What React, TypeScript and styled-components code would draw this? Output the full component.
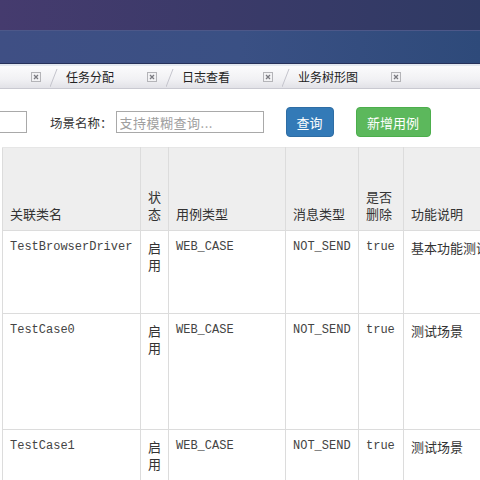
import React from "react";
import styled, { createGlobalStyle } from "styled-components";

const GlobalStyle = createGlobalStyle`
  html, body {
    margin: 0;
    padding: 0;
    background: #fff;
    overflow: hidden;
  }
  body {
    font-family: "Noto Sans CJK SC", "Noto Sans", sans-serif;
    color: #333;
  }
`;

const Page = styled.div`
  width: 480px;
  height: 480px;
  overflow: hidden;
`;

const Banner = styled.div`
  display: flex;
  flex-direction: column;
  height: 63px;
  border-bottom: 1px solid #26315a;
`;

const BannerTop = styled.div`
  height: 30px;
  background: linear-gradient(90deg, #453b6e 0%, #3b3a69 45%, #2f3a64 100%);
  border-bottom: 1px solid #4d5889;
`;

const BannerBottom = styled.div`
  flex: 1;
  background: linear-gradient(90deg, #3f4f84 0%, #3a5084 50%, #2e4a7a 100%);
`;

const Strip = styled.div`
  height: 2px;
  background: #e3e8ef;
`;

const TabBar = styled.div`
  display: flex;
  align-items: center;
  height: 22px;
  background: linear-gradient(180deg, #fbfbfc 0%, #f1f1f4 60%, #e2e2e7 100%);
  border-bottom: 1px solid #c9c9d1;
  overflow: hidden;
`;

const Tab = styled.div<{ $first?: boolean }>`
  display: flex;
  align-items: center;
  flex: none;
  height: 100%;
  margin-left: ${({ $first }) => ($first ? "31px" : "0")};
`;

const TabLabel = styled.span`
  font-size: 12px;
  color: #222;
  margin: 0 33px 0 8px;
  white-space: nowrap;
  line-height: 22px;
`;

const Slash = styled.svg`
  flex: none;
  margin-left: 9px;
`;

const Close = styled.svg`
  flex: none;
`;

const SearchRow = styled.div`
  display: flex;
  align-items: center;
  height: 30px;
  margin-top: 18px;
`;

const TextInput = styled.input<{ $width: number }>`
  box-sizing: border-box;
  width: ${({ $width }) => $width}px;
  height: 22px;
  border: 1px solid #a9a9a9;
  padding: 0 3px;
  font-family: "Noto Sans CJK SC", sans-serif;
  font-size: 13px;
  color: #333;
  outline: none;
  &::placeholder {
    color: #a0a0a0;
    letter-spacing: 0.5px;
  }
`;

const CutInput = styled(TextInput)`
  margin-left: -93px;
`;

const Label = styled.span`
  font-size: 12.5px;
  color: #333;
  margin: 0 3px 0 23px;
  white-space: nowrap;
`;

const Button = styled.button<{ $color: string; $border: string; $width: number; $gap: number }>`
  box-sizing: border-box;
  width: ${({ $width }) => $width}px;
  height: 30px;
  margin-left: ${({ $gap }) => $gap}px;
  background: ${({ $color }) => $color};
  border: 1px solid ${({ $border }) => $border};
  border-radius: 4px;
  color: #fff;
  font-family: "Noto Sans CJK SC", sans-serif;
  font-size: 13px;
  padding: 0;
`;

const Table = styled.table`
  margin: 10px 0 0 2px;
  border-collapse: collapse;
  table-layout: fixed;
  width: 561px;
`;

const Col = styled.col<{ $w: number }>`
  width: ${({ $w }) => $w}px;
`;

const Th = styled.th`
  height: 74px;
  background: #eeeeee;
  border: 1px solid #dcdcdc;
  border-top-color: #e6e6e6;
  vertical-align: bottom;
  text-align: left;
  font-weight: normal;
  font-size: 13px;
  line-height: 17px;
  color: #333;
  padding: 0 7px 8px 7px;
  white-space: nowrap;
  overflow: hidden;
`;

const Narrow = styled.span`
  display: block;
  white-space: normal;
  word-break: break-all;
`;

const Td = styled.td<{ $h: number; $mono?: boolean }>`
  height: ${({ $h }) => $h}px;
  border: 1px solid #dcdcdc;
  vertical-align: top;
  text-align: left;
  padding: 8px 7px 0 7px;
  font-family: ${({ $mono }) =>
    $mono ? `"Liberation Mono", "Courier New", monospace` : `"Noto Sans CJK SC", sans-serif`};
  font-size: ${({ $mono }) => ($mono ? "12px" : "13px")};
  line-height: 17px;
  color: ${({ $mono }) => ($mono ? "#444" : "#333")};
  white-space: nowrap;
  overflow: hidden;
`;

const CloseIcon = () => (
  <Close width="10" height="10" viewBox="0 0 10 10">
    <rect x="0.5" y="0.5" width="9" height="9" fill="#f2f2f4" stroke="#b4b4b8" />
    <path d="M3 3 L7 7 M7 3 L3 7" stroke="#7a7a80" strokeWidth="1.3" />
  </Close>
);

const SlashIcon = () => (
  <Slash width="8" height="22" viewBox="0 0 8 22">
    <path d="M0 21 L7 3" stroke="#c4c4cc" strokeWidth="1" fill="none" />
  </Slash>
);

const tabs = ["任务分配", "日志查看", "业务树形图"];

const columns = [138, 28, 117, 73, 45, 160];

const rows = [
  { name: "TestBrowserDriver", type: "WEB_CASE", msg: "NOT_SEND", del: "true", desc: "基本功能测试用例", h: 74 },
  { name: "TestCase0", type: "WEB_CASE", msg: "NOT_SEND", del: "true", desc: "测试场景", h: 107 },
  { name: "TestCase1", type: "WEB_CASE", msg: "NOT_SEND", del: "true", desc: "测试场景", h: 107 },
];

export default function App() {
  return (
    <Page>
      <GlobalStyle />
      <Banner>
        <BannerTop />
        <BannerBottom />
      </Banner>
      <Strip />
      <TabBar>
        <Tab $first>
          <CloseIcon />
        </Tab>
        {tabs.map((t) => (
          <Tab key={t}>
            <SlashIcon />
            <TabLabel>{t}</TabLabel>
            <CloseIcon />
          </Tab>
        ))}
      </TabBar>
      <SearchRow>
        <CutInput $width={120} />
        <Label>场景名称：</Label>
        <TextInput $width={148} placeholder="支持模糊查询..." />
        <Button $color="#337ab7" $border="#2e6da4" $width={48} $gap={22}>
          查询
        </Button>
        <Button $color="#5cb85c" $border="#4cae4c" $width={75} $gap={22}>
          新增用例
        </Button>
      </SearchRow>
      <Table>
        <colgroup>
          {columns.map((w, i) => (
            <Col key={i} $w={w} />
          ))}
        </colgroup>
        <thead>
          <tr>
            <Th>关联类名</Th>
            <Th>
              <Narrow>状态</Narrow>
            </Th>
            <Th>用例类型</Th>
            <Th>消息类型</Th>
            <Th>
              <Narrow>是否删除</Narrow>
            </Th>
            <Th>功能说明</Th>
          </tr>
        </thead>
        <tbody>
          {rows.map((r) => (
            <tr key={r.name}>
              <Td $h={r.h} $mono>
                {r.name}
              </Td>
              <Td $h={r.h}>
                <Narrow>启用</Narrow>
              </Td>
              <Td $h={r.h} $mono>
                {r.type}
              </Td>
              <Td $h={r.h} $mono>
                {r.msg}
              </Td>
              <Td $h={r.h} $mono>
                {r.del}
              </Td>
              <Td $h={r.h}>{r.desc}</Td>
            </tr>
          ))}
        </tbody>
      </Table>
    </Page>
  );
}
